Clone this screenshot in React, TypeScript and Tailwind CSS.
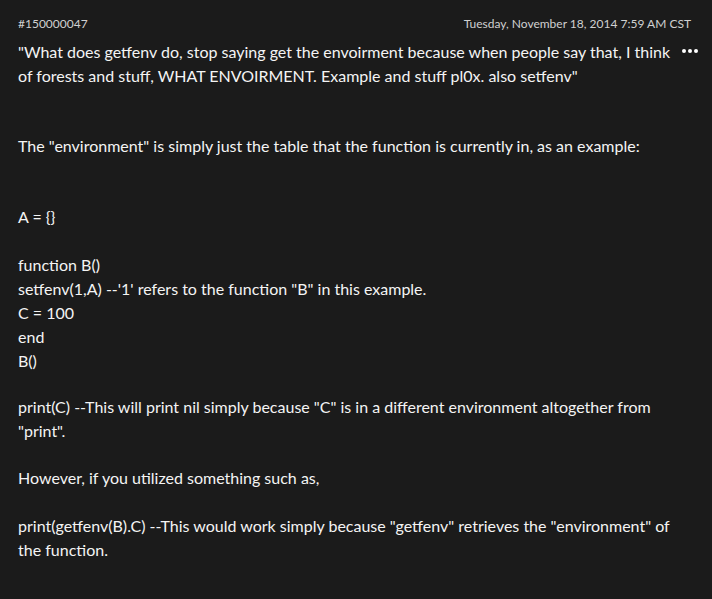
import React from 'react';

const FONT = "font-['Segoe_UI','Lato','Noto_Sans',sans-serif]";

export default function App() {
  return (
    <div className={`min-h-screen w-full bg-[#1b1b1b] text-white ${FONT}`}>
      <div className="relative px-[18px] pt-[14px]">
        {/* Header */}
        <div className="flex items-center justify-between text-[12px] leading-[20px] text-[#d0d0d0]">
          <span>#150000047</span>
          <span className="mr-[3px]">Tuesday, November 18, 2014 7:59 AM CST</span>
        </div>

        {/* More button */}
        <button className="absolute right-[12px] top-[47px] flex gap-[2px] p-[2px]" aria-label="More">
          <span className="h-[4px] w-[4px] rounded-full bg-white" />
          <span className="h-[4px] w-[4px] rounded-full bg-white" />
          <span className="h-[4px] w-[4px] rounded-full bg-white" />
        </button>

        {/* Body */}
        <div className="mt-[6px] whitespace-nowrap pr-[36px] text-[16px] leading-[24px] text-[#f4f4f4]">
          <p>
            "What does getfenv do, stop saying get the envoirment because when people say that, I think
            <br />
            of forests and stuff, WHAT ENVOIRMENT. Example and stuff pl0x. also setfenv"
          </p>
          <p className="mt-[46px]">
            The "environment" is simply just the table that the function is currently in, as an example:
          </p>
          <p className="mt-[47px]">A = {'{}'}</p>
          <p className="mt-[24px]">
            function B()
            <br />
            setfenv(1,A) --'1' refers to the function "B" in this example.
            <br />
            C = 100
            <br />
            end
            <br />
            B()
          </p>
          <p className="mt-[22px]">
            print(C) --This will print nil simply because "C" is in a different environment altogether from
            <br />
            "print".
          </p>
          <p className="mt-[23px]">However, if you utilized something such as,</p>
          <p className="mt-[24px]">
            print(getfenv(B).C) --This would work simply because "getfenv" retrieves the "environment" of
            <br />
            the function.
          </p>
        </div>
      </div>
    </div>
  );
}
